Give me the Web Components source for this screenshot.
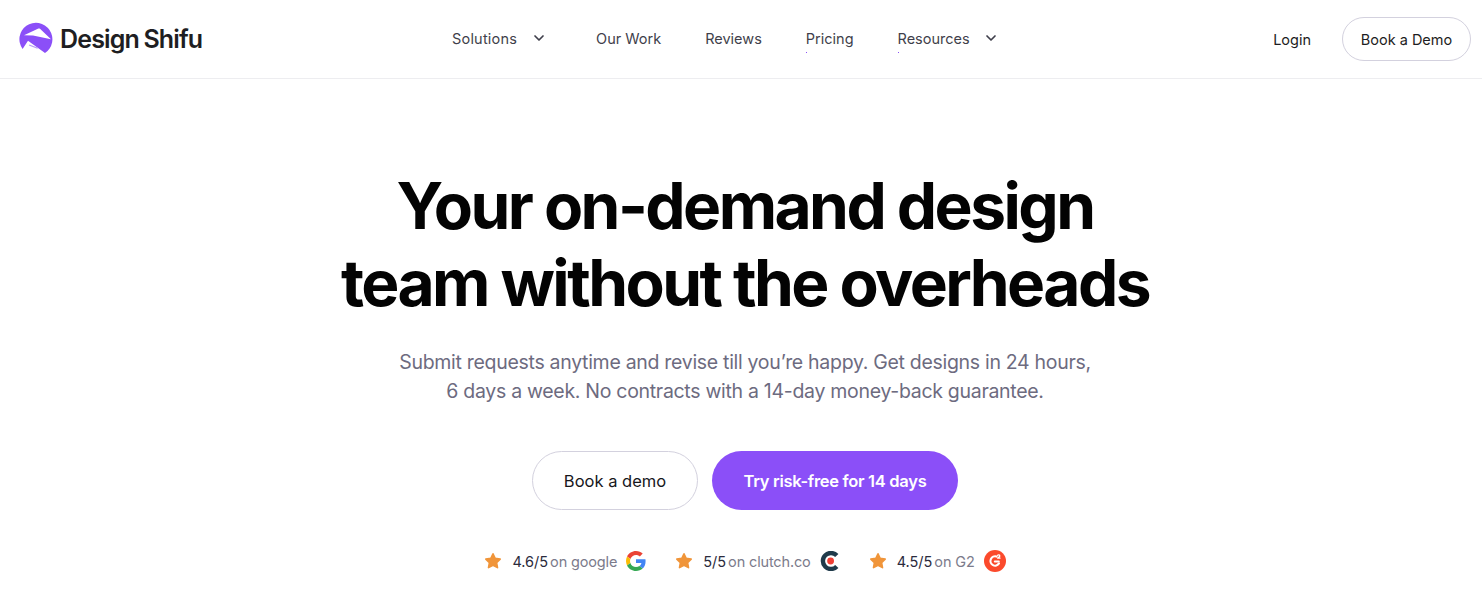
<!DOCTYPE html>
<html>
<head>
<meta charset="utf-8">
<title>Design Shifu</title>
<style>
    html, body {
        margin: 0;
        padding: 0;
        background: #fff;
        font-family: "Inter", "Liberation Sans", sans-serif;
    }
</style>
</head>
<body>
<ds-header></ds-header>
<ds-hero></ds-hero>

<template id="ds-nav-link-template">
    <style>
        :host {
            display: inline-flex;
            align-items: center;
            position: relative;
            font-size: 14.5px;
            color: #3f3f4b;
            white-space: nowrap;
        }

        svg {
            display: none;
            width: 12px;
            height: 12px;
            margin: 0 7.5px 0 15.5px;
        }

        :host([menu]) svg {
            display: block;
        }

        /* stray pixel the active underline leaves in the original */
        :host([dot])::after {
            content: "";
            position: absolute;
            left: 0;
            bottom: -6px;
            width: 1px;
            height: 1px;
            background: #8b4ff8;
        }
    </style>
    <slot></slot>
    <svg viewBox="0 0 12 12" fill="none" stroke="#3f3f4b" stroke-width="1.7" stroke-linecap="round" stroke-linejoin="round">
        <path d="M2 4l4 4 4-4" />
    </svg>
</template>

<template id="ds-header-template">
    <style>
        :host {
            display: flex;
            align-items: center;
            height: 78px;
            border-bottom: 1px solid #ededf0;
            box-sizing: content-box;
        }

        #logo {
            display: flex;
            align-items: center;
            gap: 7px;
            width: 433px;
            padding-left: 19px;
            box-sizing: content-box;
            flex: none;
            font-size: 25px;
            font-weight: 600;
            letter-spacing: -0.85px;
            word-spacing: -1px;
            color: #1e1e22;
            white-space: nowrap;
        }

        #logo svg {
            width: 34px;
            height: 34px;
            flex: none;
        }

        nav {
            display: flex;
            align-items: center;
            gap: 44px;
            padding-bottom: 2px;
        }

        #solutions {
            letter-spacing: 0.2px;
        }

        #right {
            margin-left: auto;
            display: flex;
            align-items: center;
            gap: 31px;
            padding-right: 11px;
        }

        #login {
            font-size: 14.5px;
            color: #1d1d22;
        }

        #demo {
            display: flex;
            align-items: center;
            justify-content: center;
            width: 129px;
            height: 44px;
            box-sizing: border-box;
            font-size: 14.5px;
            color: #1d1d22;
            background: #fff;
            border: 1px solid #d3d1de;
            border-radius: 22px;
        }
    </style>
    <div id="logo">
        <svg viewBox="0 0 34 34">
            <path fill="#8b4ff8" d="M3.6 27A16.5 16.5 0 1 1 26 31L9 18.7Z" />
            <path fill="#fff" d="M5 13.2 19.4 6.6c.6-.3 1.1-.2 1.6.2L32 17.2 14 13.4Z" />
            <path fill="#b99bf5" d="M10.4 22.4 19 25.8l-.6 1-8.6-3.4Z" />
        </svg>
        <span>Design Shifu</span>
    </div>
    <nav>
        <ds-nav-link id="solutions" menu>Solutions</ds-nav-link>
        <ds-nav-link>Our Work</ds-nav-link>
        <ds-nav-link>Reviews</ds-nav-link>
        <ds-nav-link dot>Pricing</ds-nav-link>
        <ds-nav-link menu dot>Resources</ds-nav-link>
    </nav>
    <div id="right">
        <span id="login">Login</span>
        <span id="demo">Book a Demo</span>
    </div>
</template>

<template id="ds-rating-template">
    <style>
        :host {
            display: inline-flex;
            align-items: center;
            font-size: 14.5px;
            white-space: nowrap;
            color: #7b7b8b;
            letter-spacing: -0.15px;
        }

        #star {
            width: 18px;
            height: 18px;
            margin-right: 10px;
        }

        b {
            font-weight: 400;
            color: #2b2b3d;
            margin-right: 2px;
            letter-spacing: 0;
        }

        #mark {
            display: flex;
            margin-left: 9px;
        }
    </style>
    <svg id="star" viewBox="0 0 18 18">
        <path fill="#f0953a" stroke="#f0953a" stroke-width="1.6" stroke-linejoin="round" d="M9 1.8l2.2 4.6 5 .7-3.6 3.5.9 5L9 13.2l-4.5 2.4.9-5L1.8 7.1l5-.7Z" />
    </svg>
    <b><slot name="score"></slot></b>
    <slot></slot>
    <span id="mark"><slot name="mark"></slot></span>
</template>

<template id="ds-hero-template">
    <style>
        :host {
            display: flex;
            flex-direction: column;
            align-items: center;
            padding: 88px 0 0 8px;
        }

        h1 {
            margin: 0;
            font-size: 64px;
            line-height: 77px;
            font-weight: 700;
            letter-spacing: -2.55px;
            color: #030303;
            text-align: center;
            white-space: nowrap;
        }

        p {
            margin: 27px 0 0;
            font-size: 19.5px;
            line-height: 29px;
            letter-spacing: -0.3px;
            color: #6d6b7f;
            text-align: center;
            white-space: nowrap;
        }

        #actions {
            display: flex;
            gap: 14px;
            margin-top: 45px;
        }

        #actions span {
            display: flex;
            align-items: center;
            justify-content: center;
            height: 59px;
            box-sizing: border-box;
            border-radius: 30px;
            font-size: 16.5px;
        }

        #book {
            width: 166px;
            color: #17171c;
            border: 1px solid #d3d1de;
            background: #fff;
        }

        #try {
            width: 246px;
            color: #fff;
            font-weight: 600;
            letter-spacing: -0.3px;
            background: #8b4ff8;
        }

        #ratings {
            display: flex;
            gap: 29px;
            margin-top: 40px;
        }

        svg {
            display: block;
        }
    </style>
    <h1>Your on-demand design<br>team without the overheads</h1>
    <p>Submit requests anytime and revise till you’re happy. Get designs in 24 hours,<br>6 days a week. No contracts with a 14-day money-back guarantee.</p>
    <div id="actions">
        <span id="book">Book a demo</span>
        <span id="try">Try risk-free for 14 days</span>
    </div>
    <div id="ratings">
        <ds-rating>
            <span slot="score">4.6/5</span>on google
            <svg slot="mark" width="20" height="20" viewBox="0 0 48 48">
                <path fill="#EA4335" d="M24 9.5c3.5 0 6.7 1.2 9.2 3.6l6.9-6.9C35.9 2.4 30.5 0 24 0 14.6 0 6.5 5.4 2.6 13.2l8 6.2C12.4 13.7 17.7 9.5 24 9.5Z" />
                <path fill="#4285F4" d="M47 24.5c0-1.6-.1-3.1-.4-4.5H24v9h12.9c-.6 3-2.2 5.5-4.7 7.2l7.7 6c4.5-4.2 7.1-10.4 7.1-17.7Z" />
                <path fill="#FBBC05" d="M10.5 28.6c-.5-1.4-.8-3-.8-4.6s.3-3.2.8-4.6l-8-6.2C.9 16.5 0 20.1 0 24s.9 7.5 2.6 10.8Z" />
                <path fill="#34A853" d="M24 48c6.5 0 11.9-2.1 15.9-5.8l-7.7-6c-2.2 1.4-4.9 2.3-8.2 2.3-6.3 0-11.6-4.2-13.5-9.9l-8 6.2C6.5 42.6 14.6 48 24 48Z" />
            </svg>
        </ds-rating>
        <ds-rating>
            <span slot="score">5/5</span>on clutch.co
            <svg slot="mark" width="20" height="20" viewBox="0 0 20 20">
                <path fill="none" stroke="#1f3a4a" stroke-width="4.4" d="M16.8 15.4A8 8 0 1 1 16.8 4.6" />
                <circle cx="10.6" cy="10" r="3.4" fill="#ef3f35" />
            </svg>
        </ds-rating>
        <ds-rating>
            <span slot="score">4.5/5</span>on G2
            <svg slot="mark" width="22" height="22" viewBox="0 0 22 22">
                <circle cx="11" cy="11" r="11" fill="#fb4a2c" />
                <path fill="none" stroke="#fff" stroke-width="2.1" stroke-linecap="round" d="M12.5 6.6A4.6 4.6 0 1 0 15 13.4" />
                <path fill="none" stroke="#fff" stroke-width="2" stroke-linecap="round" d="M10.8 11.6h4" />
                <path fill="none" stroke="#fff" stroke-width="1.3" stroke-linecap="round" stroke-linejoin="round" d="M13.6 5.2c.8-.7 2.2-.3 2.2.7 0 .9-1.4 1.3-2.2 2.2h2.5" />
            </svg>
        </ds-rating>
    </div>
</template>

<script>
    (() => {

        const stamp = (element, id) => {
            const template = document.getElementById(id);
            element.attachShadow({ mode: "open" }).appendChild(template.content.cloneNode(true));
        }

        class DsNavLink extends HTMLElement {
            constructor() {
                super();
                stamp(this, "ds-nav-link-template");
            }
        }

        class DsHeader extends HTMLElement {
            constructor() {
                super();
                stamp(this, "ds-header-template");
            }
        }

        class DsRating extends HTMLElement {
            constructor() {
                super();
                stamp(this, "ds-rating-template");
            }
        }

        class DsHero extends HTMLElement {
            constructor() {
                super();
                stamp(this, "ds-hero-template");
            }
        }

        customElements.define("ds-nav-link", DsNavLink);
        customElements.define("ds-header", DsHeader);
        customElements.define("ds-rating", DsRating);
        customElements.define("ds-hero", DsHero);
    })();
</script>
</body>
</html>
